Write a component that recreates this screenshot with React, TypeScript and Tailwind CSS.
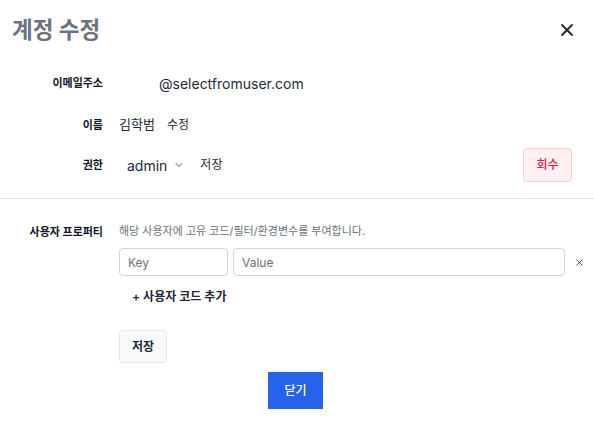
import { X, ChevronDown } from "lucide-react";

export default function App() {
  return (
    <div
      className="w-[594px] h-[423px] bg-white text-[#111827] overflow-hidden"
      style={{ fontFamily: 'Inter, "Noto Sans CJK KR", sans-serif' }}
    >
      <div className="flex items-center justify-between pl-[12px] pr-[17px] pt-[14px] h-[46px]">
        <h1 className="text-[22.5px] font-bold text-[#6b7280] leading-none">계정 수정</h1>
        <button className="text-[#1f2937]">
          <X className="w-[20px] h-[20px]" strokeWidth={2.2} />
        </button>
      </div>

      <div className="flex flex-col pt-[22px]">
        <div className="flex items-center h-[30px]">
          <div className="w-[103px] text-right text-[11px] font-bold">이메일주소</div>
          <div className="pl-[56px] text-[14px] text-[#1f2937]">@selectfromuser.com</div>
        </div>
        <div className="flex items-center h-[30px] mt-[12px]">
          <div className="w-[103px] text-right text-[11px] font-bold">이름</div>
          <div className="pl-[16px] text-[13px] text-[#1f2937]">김학범</div>
          <button className="ml-[12px] text-[12px] text-[#1f2937]">수정</button>
        </div>
        <div className="flex items-center h-[34px] mt-[8px] pr-[22px]">
          <div className="w-[103px] text-right text-[11px] font-bold">권한</div>
          <div className="pl-[24px] flex items-center text-[14px] text-[#1f2937]">
            admin
            <ChevronDown className="w-[12px] h-[12px] ml-[6px] text-[#4b5563]" />
          </div>
          <button className="ml-[15px] text-[12px] text-[#1f2937]">저장</button>
          <button className="ml-auto w-[49px] h-[34px] rounded-[4px] border border-[#fecdd3] bg-[#fff1f2] text-[12px] font-medium text-[#e11d48]">
            회수
          </button>
        </div>
      </div>

      <div className="mt-[16px] border-t border-[#e5e7eb]" />

      <div className="flex pt-[24px]">
        <div className="w-[103px] text-right text-[11px] font-bold pt-[1px]">사용자 프로퍼티</div>
        <div className="flex-1 pl-[16px] pr-[5px]">
          <div className="text-[11px] text-[#6b7280] leading-[16px]">
            해당 사용자에 고유 코드/필터/환경변수를 부여합니다.
          </div>
          <div className="flex items-center gap-[5px] mt-[9px]">
            <input
              placeholder="Key"
              className="w-[109px] h-[28px] rounded-[4px] border border-[#d1d5db] px-[8px] text-[12px] placeholder:text-[#6b7280] outline-none"
            />
            <input
              placeholder="Value"
              className="flex-1 h-[28px] rounded-[4px] border border-[#d1d5db] px-[8px] text-[12px] placeholder:text-[#6b7280] outline-none"
            />
            <button className="w-[20px] ml-[-1px] flex justify-center text-[#374151]">
              <X className="w-[11px] h-[11px]" strokeWidth={2} />
            </button>
          </div>
          <button className="mt-[12px] ml-[13px] text-[12px] font-semibold text-[#1f2937]">
            + 사용자 코드 추가
          </button>
          <div className="mt-[23px]">
            <button className="w-[48px] h-[33px] rounded-[4px] border border-[#e5e7eb] bg-[#f9fafb] text-[12px] font-semibold text-[#1f2937]">
              저장
            </button>
          </div>
        </div>
      </div>

      <div className="flex justify-center mt-[9px]">
        <button className="w-[55px] h-[37px] bg-[#2563eb] text-white text-[12px] font-medium ml-[-3px]">
          닫기
        </button>
      </div>
    </div>
  );
}
